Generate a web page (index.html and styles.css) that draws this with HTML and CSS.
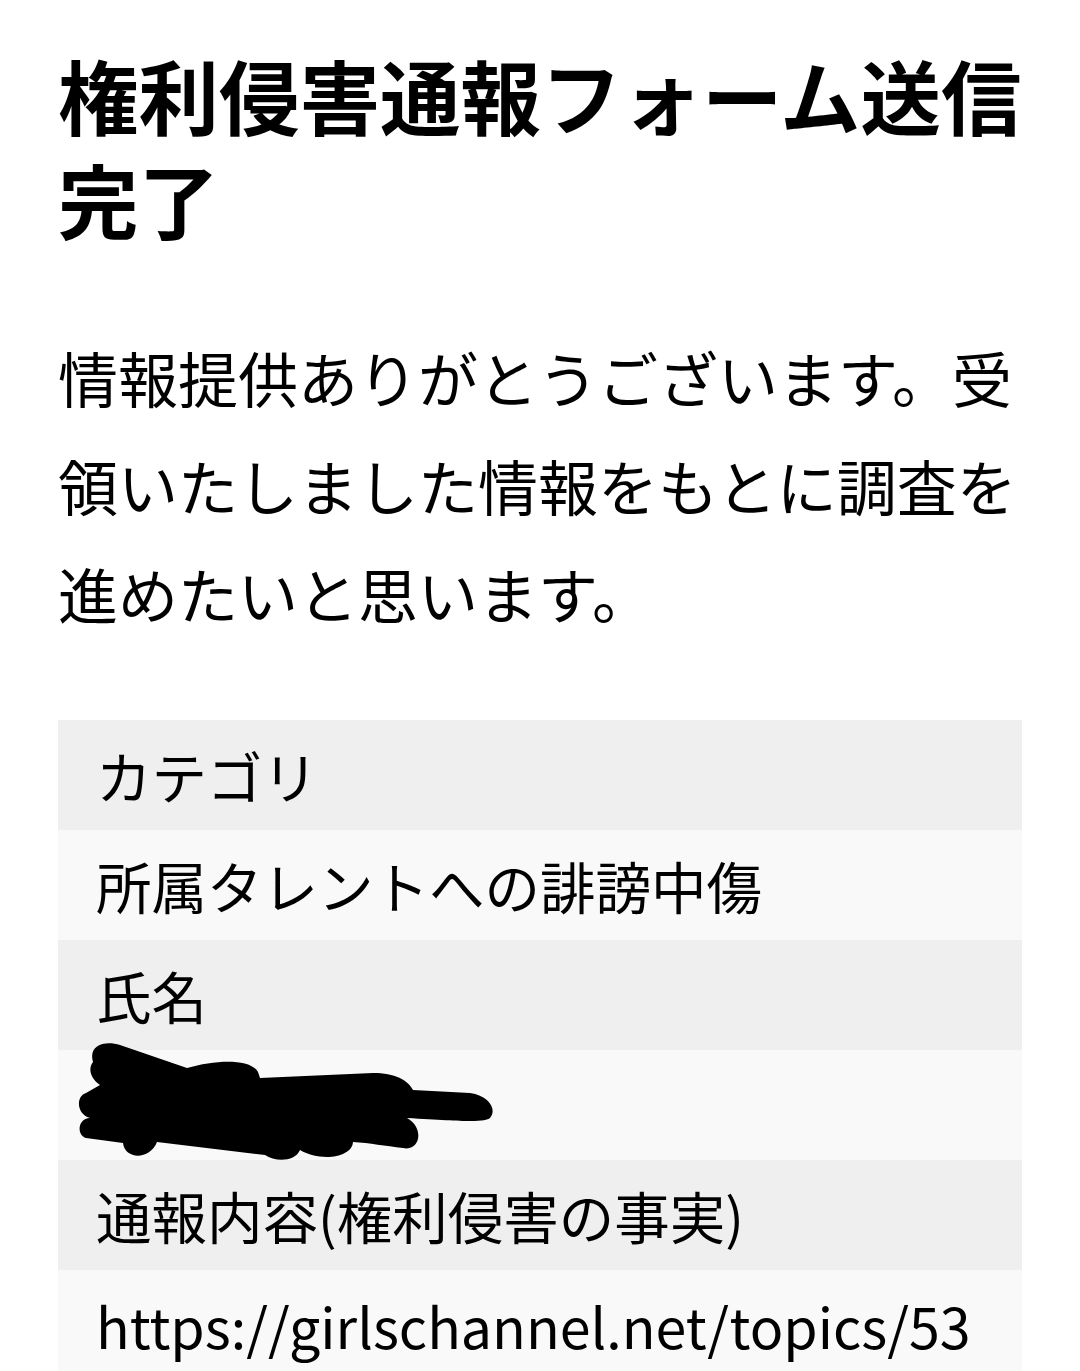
FILE: index.html
```html
<!DOCTYPE html>
<html lang="ja">
<head>
<meta charset="utf-8">
<title>権利侵害通報フォーム送信完了</title>
<link rel="stylesheet" href="styles.css">
</head>
<body>
<main class="page">
  <h1 class="title">権利侵害通報フォーム送信完了</h1>
  <p class="lead">情報提供ありがとうございます。受領いたしました情報をもとに調査を進めたいと思います。</p>
  <dl class="table">
    <dt class="row head">カテゴリ</dt>
    <dd class="row body">所属タレントへの誹謗中傷</dd>
    <dt class="row head">氏名</dt>
    <dd class="row body redacted">
      <svg class="scribble" viewBox="58 1040 460 125" width="460" height="125" aria-hidden="true">
        <path d="M93 1062 C88 1045 105 1040 120 1045 L187 1068 C215 1060 250 1058 258 1072 L260 1078 L373 1073 C395 1073 408 1080 413 1090 L470 1093 C490 1096 497 1110 490 1118 C485 1122 470 1122 407 1118 C425 1128 420 1152 403 1148 C385 1146 370 1143 353 1142 C352 1158 320 1162 300 1150 C295 1162 275 1162 265 1155 L157 1142 C150 1160 125 1160 123 1143 L86 1138 C76 1135 78 1118 90 1118 C76 1114 76 1096 86 1093 L100 1085 C90 1078 88 1068 93 1062 Z" fill="#000"/>
      </svg>
    </dd>
    <dt class="row head">通報内容(権利侵害の事実)</dt>
    <dd class="row body">https://girlschannel.net/topics/53</dd>
  </dl>
</main>
</body>
</html>
```
FILE: styles.css
```css
html, body {
  margin: 0;
  padding: 0;
  background: #ffffff;
}
body {
  font-family: "Noto Sans CJK JP", "Noto Sans", sans-serif;
  color: #000;
  overflow: hidden;
}
.page {
  padding: 42px 58px 0 58px;
}
.title {
  margin: 0;
  font-size: 80.5px;
  line-height: 104px;
  font-weight: 700;
}
.lead {
  margin: 73px 0 0 0;
  font-size: 60px;
  line-height: 108px;
  font-weight: 400;
}
.table {
  margin: 73px 0 0 0;
  padding: 0;
}
.row {
  margin: 0;
  height: 110px;
  box-sizing: border-box;
  padding: 0 38px;
  display: flex;
  align-items: center;
  font-size: 55.5px;
  line-height: 78px;
  white-space: nowrap;
}
.head {
  background: #efefef;
}
.body {
  background: #f9f9f9;
}
.redacted {
  position: relative;
}
.scribble {
  position: absolute;
  left: 0;
  top: -10px;
  overflow: visible;
}
```
